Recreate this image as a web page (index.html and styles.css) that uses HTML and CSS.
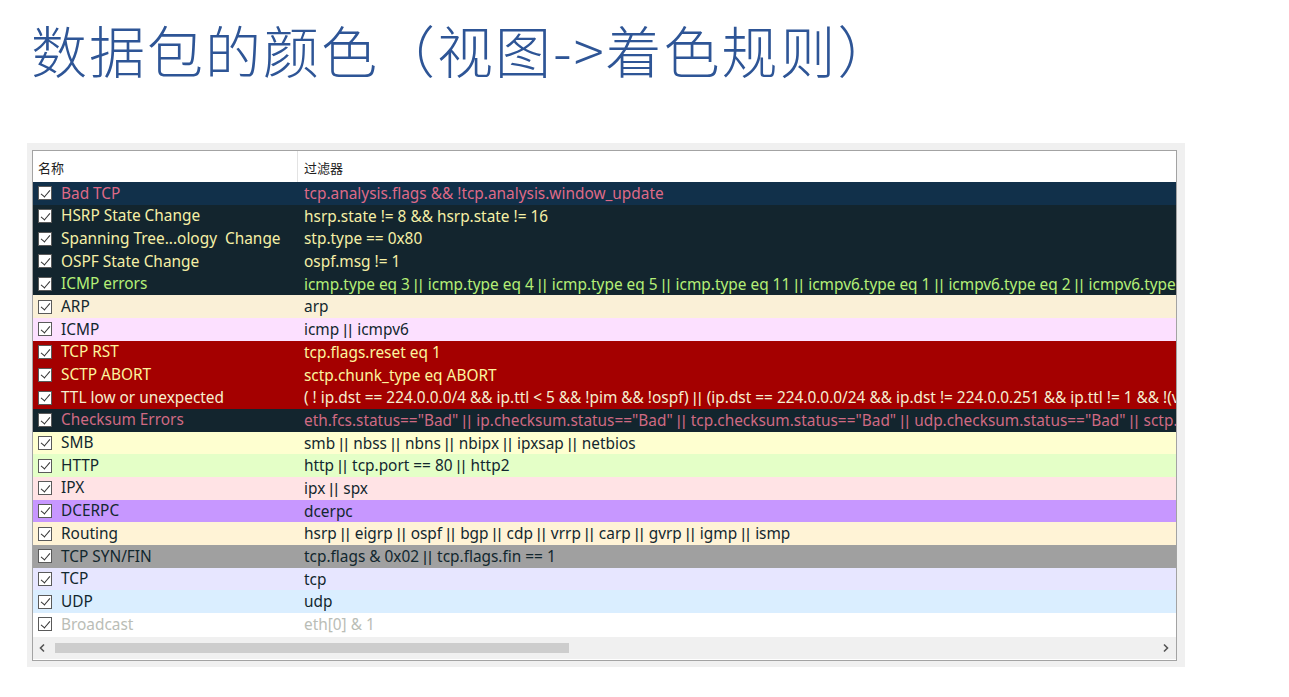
FILE: index.html
```html
<!DOCTYPE html>
<html lang="zh-CN">
<head>
<meta charset="utf-8">
<title>数据包的颜色</title>
<link rel="stylesheet" href="styles.css">
</head>
<body>
<h1 class="title">数据包的颜色（视图-&gt;着色规则）</h1>
<div class="panel">
  <div class="box">
    <div class="head">
      <div class="hcell hname">名称</div>
      <div class="hcell">过滤器</div>
    </div>
    <div class="rows">
      <div class="row r-badtcp"><div class="name"><span class="cb"></span>Bad TCP</div><div class="filter">tcp.analysis.flags &amp;&amp; !tcp.analysis.window_update</div></div>
      <div class="row r-dark"><div class="name"><span class="cb"></span>HSRP State Change</div><div class="filter">hsrp.state != 8 &amp;&amp; hsrp.state != 16</div></div>
      <div class="row r-dark"><div class="name"><span class="cb"></span>Spanning Tree...ology&nbsp; Change</div><div class="filter">stp.type == 0x80</div></div>
      <div class="row r-dark"><div class="name"><span class="cb"></span>OSPF State Change</div><div class="filter">ospf.msg != 1</div></div>
      <div class="row r-icmperr"><div class="name"><span class="cb"></span>ICMP errors</div><div class="filter">icmp.type eq 3 <span class="or">||</span> icmp.type eq 4 <span class="or">||</span> icmp.type eq 5 <span class="or">||</span> icmp.type eq 11 <span class="or">||</span> icmpv6.type eq 1 <span class="or">||</span> icmpv6.type eq 2 <span class="or">||</span> icmpv6.type eq 3 <span class="or">||</span> icmpv6.type eq 4</div></div>
      <div class="row r-arp"><div class="name"><span class="cb"></span>ARP</div><div class="filter">arp</div></div>
      <div class="row r-icmp"><div class="name"><span class="cb"></span>ICMP</div><div class="filter">icmp <span class="or">||</span> icmpv6</div></div>
      <div class="row r-red"><div class="name"><span class="cb"></span>TCP RST</div><div class="filter">tcp.flags.reset eq 1</div></div>
      <div class="row r-red"><div class="name"><span class="cb"></span>SCTP ABORT</div><div class="filter">sctp.chunk_type eq ABORT</div></div>
      <div class="row r-ttl"><div class="name"><span class="cb"></span>TTL low or unexpected</div><div class="filter">( ! ip.dst == 224.0.0.0/4 &amp;&amp; ip.ttl &lt; 5 &amp;&amp; !pim &amp;&amp; !ospf) <span class="or">||</span> (ip.dst == 224.0.0.0/24 &amp;&amp; ip.dst != 224.0.0.251 &amp;&amp; ip.ttl != 1 &amp;&amp; !(vrrp <span class="or">||</span> carp))</div></div>
      <div class="row r-cksum"><div class="name"><span class="cb"></span>Checksum Errors</div><div class="filter">eth.fcs.status=="Bad" <span class="or">||</span> ip.checksum.status=="Bad" <span class="or">||</span> tcp.checksum.status=="Bad" <span class="or">||</span> udp.checksum.status=="Bad" <span class="or">||</span> sctp.checksum.status=="Bad" <span class="or">||</span> mstp.checksum.status=="Bad"</div></div>
      <div class="row r-smb"><div class="name"><span class="cb"></span>SMB</div><div class="filter">smb <span class="or">||</span> nbss <span class="or">||</span> nbns <span class="or">||</span> nbipx <span class="or">||</span> ipxsap <span class="or">||</span> netbios</div></div>
      <div class="row r-http"><div class="name"><span class="cb"></span>HTTP</div><div class="filter">http <span class="or">||</span> tcp.port == 80 <span class="or">||</span> http2</div></div>
      <div class="row r-ipx"><div class="name"><span class="cb"></span>IPX</div><div class="filter">ipx <span class="or">||</span> spx</div></div>
      <div class="row r-dcerpc"><div class="name"><span class="cb"></span>DCERPC</div><div class="filter">dcerpc</div></div>
      <div class="row r-routing"><div class="name"><span class="cb"></span>Routing</div><div class="filter">hsrp <span class="or">||</span> eigrp <span class="or">||</span> ospf <span class="or">||</span> bgp <span class="or">||</span> cdp <span class="or">||</span> vrrp <span class="or">||</span> carp <span class="or">||</span> gvrp <span class="or">||</span> igmp <span class="or">||</span> ismp</div></div>
      <div class="row r-syn"><div class="name"><span class="cb"></span>TCP SYN/FIN</div><div class="filter">tcp.flags &amp; 0x02 <span class="or">||</span> tcp.flags.fin == 1</div></div>
      <div class="row r-tcp"><div class="name"><span class="cb"></span>TCP</div><div class="filter">tcp</div></div>
      <div class="row r-udp"><div class="name"><span class="cb"></span>UDP</div><div class="filter">udp</div></div>
      <div class="row r-bcast"><div class="name"><span class="cb"></span>Broadcast</div><div class="filter">eth[0] &amp; 1</div></div>
    </div>
    <div class="hscroll">
      <svg class="arrow" width="8" height="10" viewBox="0 0 8 10"><path d="M6 1.5 L2.5 5 L6 8.5" fill="none" stroke="#555" stroke-width="1.6"/></svg>
      <div class="track"><div class="thumb"></div></div>
      <svg class="arrow" width="8" height="10" viewBox="0 0 8 10"><path d="M2 1.5 L5.5 5 L2 8.5" fill="none" stroke="#555" stroke-width="1.6"/></svg>
    </div>
  </div>
</div>
</body>
</html>
```
FILE: styles.css
```css
* { box-sizing: border-box; }
html, body { margin: 0; padding: 0; background: #ffffff; }
body { width: 1289px; height: 697px; overflow: hidden; }

.title {
  margin: 0;
  padding: 14px 0 0 31px;
  height: 143px;
  font-family: "Noto Sans CJK SC", "Noto Sans", sans-serif;
  font-weight: 300;
  font-size: 56px;
  line-height: 70px;
  color: #2e5596;
  letter-spacing: 2px;
}

.panel {
  margin-left: 27px;
  width: 1158px;
  height: 524px;
  background: #f0f0f0;
  padding: 7px 8px 6px 5px;
}

.box {
  height: 511px;
  border: 1px solid #a3a3a3;
  background: #ffffff;
  display: flex;
  flex-direction: column;
  overflow: hidden;
  font-family: "Noto Sans", "Open Sans", sans-serif;
  font-size: 15.4px;
}

.head {
  display: grid;
  grid-template-columns: 265px 1fr;
  height: 31px;
  flex: none;
  background: #ffffff;
}
.hcell {
  font-family: "Noto Sans CJK SC", sans-serif;
  font-size: 13px;
  color: #222;
  display: flex;
  align-items: center;
  padding-left: 6px;
  padding-top: 2px;
}
.hname { border-right: 1px solid #e3e3e3; padding-left: 5px; }

.rows { flex: none; }
.row {
  display: grid;
  grid-template-columns: 265px 1fr;
  height: 22.7px;
  white-space: nowrap;
  overflow: hidden;
  color: #12272e;
  line-height: 22.7px;
}
.name { display: flex; align-items: center; padding: 1px 0 0 5px; overflow: hidden; }
.filter { padding: 1px 0 0 6px; overflow: hidden; }
.or { font-family: "Liberation Sans", sans-serif; letter-spacing: 1px; }

.cb {
  flex: none;
  width: 14px;
  height: 14px;
  border: 1px solid #5a5a5a;
  background: #ffffff;
  margin: -1px 9px 0 0;
  position: relative;
}
.cb::after {
  content: "";
  position: absolute;
  left: 3.5px;
  top: 0.5px;
  width: 4px;
  height: 8px;
  border-right: 1.7px solid #333;
  border-bottom: 1.7px solid #333;
  transform: rotate(40deg);
}

.r-badtcp { background: #11304a; color: #de6a87; }
.r-dark { background: #13252e; color: #f6f0a6; }
.r-icmperr { background: #13252e; color: #b5ef77; }
.r-arp { background: #faf0d7; }
.r-icmp { background: #fce0ff; }
.r-red { background: #a40000; color: #fdf59e; }
.r-ttl { background: #a40000; color: #f5efd0; }
.r-cksum { background: #13252e; color: #cf6a83; }
.r-smb { background: #feffd0; }
.r-http { background: #e4ffc7; }
.r-ipx { background: #ffe3e5; }
.r-dcerpc { background: #c797ff; }
.r-routing { background: #fff3d6; }
.r-syn { background: #a0a0a0; }
.r-tcp { background: #e7e6ff; }
.r-udp { background: #daeeff; }
.r-bcast { background: #ffffff; color: #babdb6; }

.hscroll {
  flex: none;
  height: 22px;
  margin-top: 1px;
  background: #f0f0f0;
  display: flex;
  align-items: center;
  padding: 0 6px 0 5px;
}
.arrow { flex: none; }
.track { flex: 1; height: 100%; display: flex; align-items: center; padding: 0 3px 0 9px; }
.thumb { width: 514px; height: 10px; background: #cdcdcd; }
```
